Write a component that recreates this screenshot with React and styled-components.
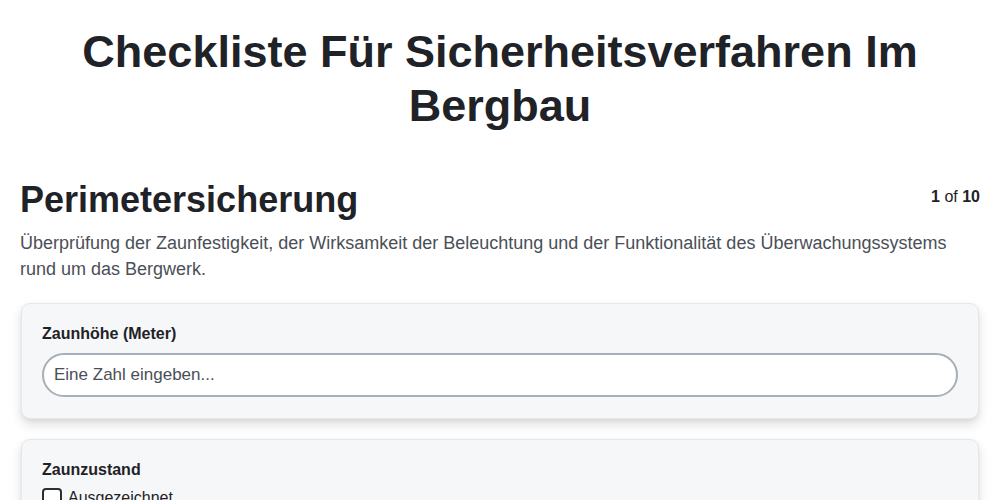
import React from "react";
import styled, { createGlobalStyle } from "styled-components";

const Global = createGlobalStyle`
  html, body { margin: 0; padding: 0; background: #ffffff; }
  body { font-family: "Liberation Sans", Arial, sans-serif; color: #1f2226; }
  * { box-sizing: border-box; }
`;

const Page = styled.div`
  padding: 20px 20px;
`;

const Title = styled.h1`
  margin: 5px 0 0;
  text-align: center;
  font-size: 45px;
  line-height: 54px;
  font-weight: 700;
  color: #1f2226;
  padding: 0 60px;
`;

const SectionHead = styled.div`
  display: flex;
  justify-content: space-between;
  align-items: flex-start;
  margin-top: 45px;
`;

const SectionTitle = styled.h2`
  margin: 0;
  font-size: 36px;
  line-height: 44px;
  font-weight: 700;
  color: #1f2226;
`;

const Counter = styled.div`
  font-size: 16px;
  margin-top: 10px;
  color: #1f2226;
  b { font-weight: 700; }
`;

const Description = styled.p`
  margin: 8px 0 0;
  font-size: 18px;
  line-height: 26px;
  color: #4a4f57;
`;

const Cards = styled.div`
  display: flex;
  flex-direction: column;
  gap: 20px;
  margin-top: 21px;
  padding: 0 1px;
`;

const Card = styled.div`
  background: #f6f7f9;
  border: 1px solid #e5e7eb;
  border-radius: 9px;
  padding: 20px 20px 21px;
  box-shadow: 0 6px 12px rgba(0, 0, 0, 0.12), 0 2px 4px rgba(0, 0, 0, 0.05);
`;

const Label = styled.label`
  display: block;
  font-size: 16px;
  font-weight: 700;
  color: #1f2226;
  line-height: 20px;
`;

const Input = styled.input`
  display: block;
  width: 100%;
  margin-top: 9px;
  height: 44px;
  border: 2px solid #a7aeb7;
  border-radius: 22px;
  padding: 0 10px;
  font-family: "Liberation Sans", Arial, sans-serif;
  font-size: 17px;
  background: #fff;
  color: #1f2226;
  outline: none;
  &::placeholder { color: #4a4f57; }
`;

const Option = styled.label`
  display: flex;
  align-items: center;
  gap: 6px;
  margin-top: 8px;
  font-size: 16px;
  color: #1f2226;
`;

const Box = styled.span`
  width: 20px;
  height: 20px;
  border: 2px solid #2b2f35;
  border-radius: 4px;
  background: #fff;
  flex: none;
`;

export default function App() {
  return (
    <>
      <Global />
      <Page>
        <Title>Checkliste Für Sicherheitsverfahren Im Bergbau</Title>
        <SectionHead>
          <SectionTitle>Perimetersicherung</SectionTitle>
          <Counter><b>1</b> of <b>10</b></Counter>
        </SectionHead>
        <Description>
          Überprüfung der Zaunfestigkeit, der Wirksamkeit der Beleuchtung und der Funktionalität des Überwachungssystems rund um das Bergwerk.
        </Description>
        <Cards>
          <Card>
            <Label>Zaunhöhe (Meter)</Label>
            <Input type="number" placeholder="Eine Zahl eingeben..." />
          </Card>
          <Card>
            <Label>Zaunzustand</Label>
            <Option><Box />Ausgezeichnet</Option>
            <Option><Box />Gut</Option>
          </Card>
        </Cards>
      </Page>
    </>
  );
}
